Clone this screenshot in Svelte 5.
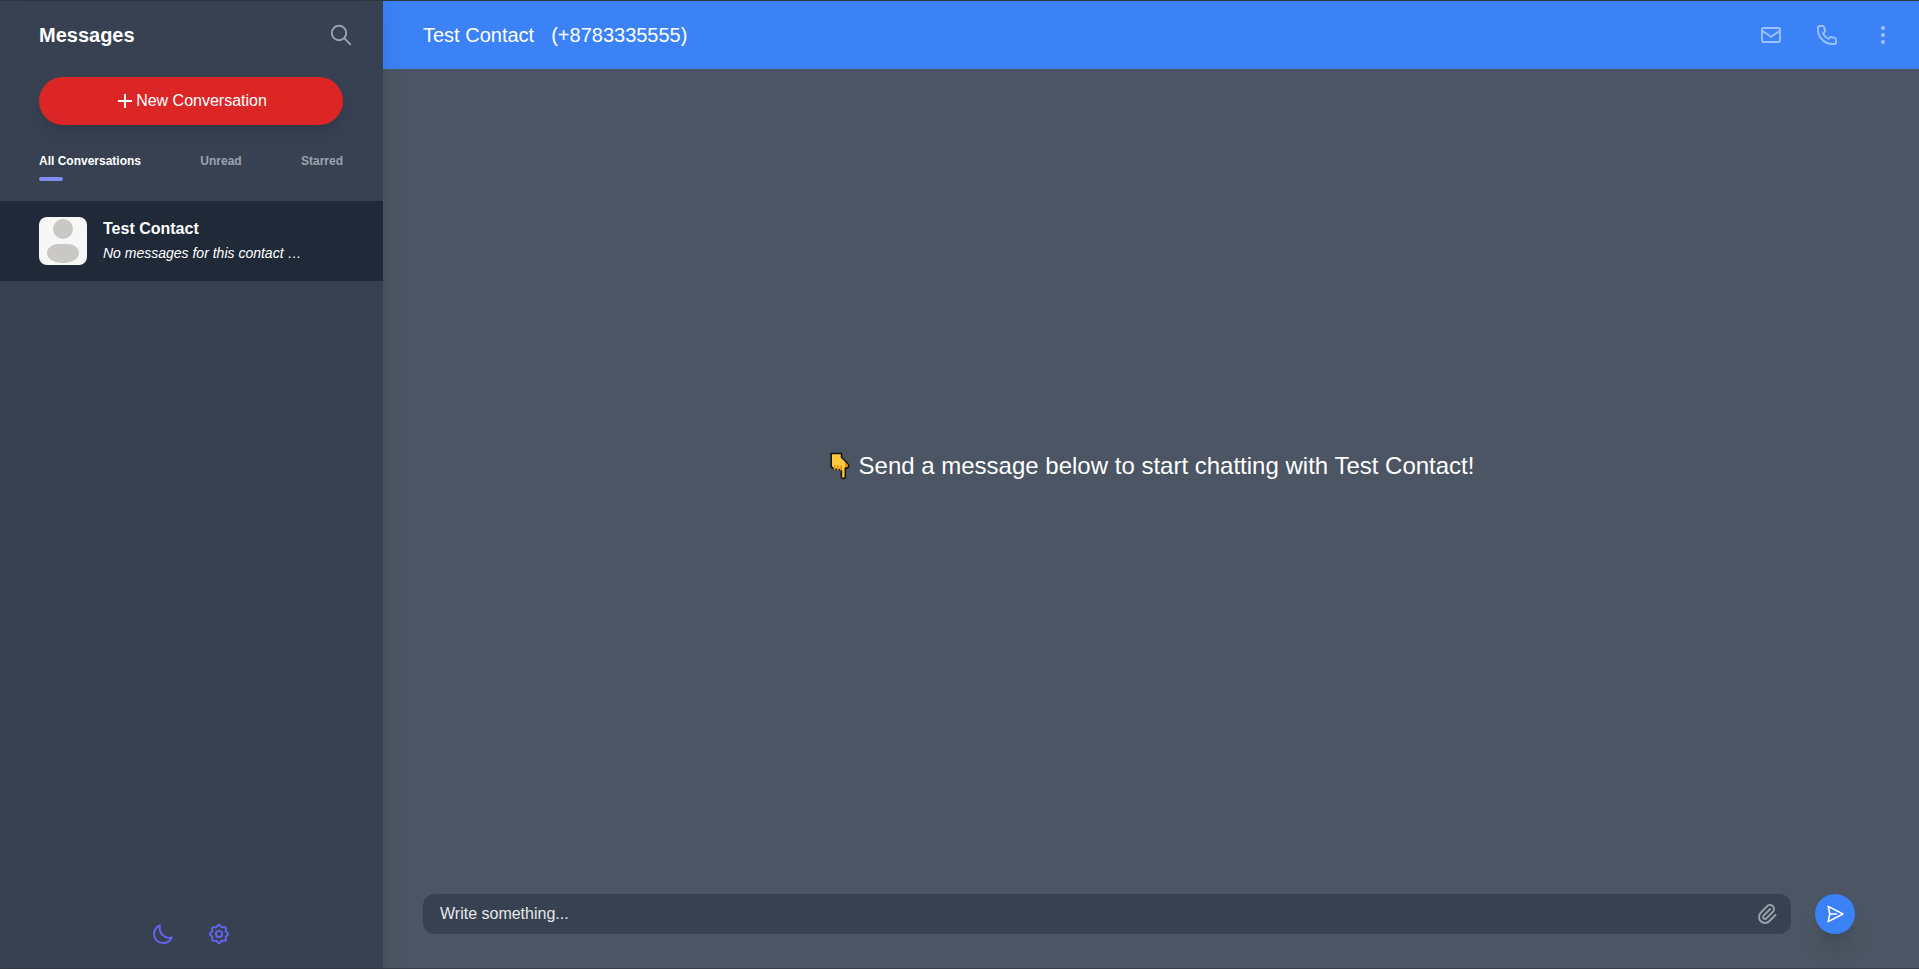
<script>
  const tabs = ['All Conversations', 'Unread', 'Starred'];
  const contact = { name: 'Test Contact', phone: '+8783335555' };
  let active = $state(0);
  let draft = $state('');

  // Outline of an eight-toothed gear around (12, 12)
  const gear =
    'M' +
    Array.from({ length: 96 }, (_, i) => {
      const a = (i / 96) * Math.PI * 2;
      const c = Math.cos(8 * a);
      const r = 8.2 + 0.85 * Math.sign(c) * Math.pow(Math.abs(c), 0.7);
      return `${(12 + r * Math.sin(a)).toFixed(2)} ${(12 - r * Math.cos(a)).toFixed(2)}`;
    }).join('L') +
    'Z';
</script>

<div class="app">
  <aside>
    <header class="side-head">
      <h1>Messages</h1>
      <button class="icon muted" aria-label="Search">
        <svg viewBox="0 0 24 24"><circle cx="10" cy="10" r="7.2" /><path d="M15.2 15.2 21.3 21.3" /></svg>
      </button>
    </header>
    <button class="new">
      <svg viewBox="0 0 14 14"><path d="M7 0v14M0 7h14" /></svg>
      New Conversation
    </button>
    <nav class="tabs">
      {#each tabs as tab, i}
        <button class:active={active === i} onclick={() => (active = i)}>{tab}</button>
      {/each}
    </nav>
    <a class="contact" href="#contact">
      <svg class="avatar" viewBox="0 0 48 48">
        <rect width="48" height="48" fill="#f7f7f7" />
        <circle cx="24" cy="12" r="10" fill="#c9c8c4" />
        <path d="M19 27H29C35 27 40 31 40 36C40 42 33 46 24 46S8 42 8 36C8 31 13 27 19 27Z" fill="#c9c8c4" />
      </svg>
      <div class="who">
        <strong>{contact.name}</strong>
        <em>No messages for this contact …</em>
      </div>
    </a>
    <footer class="tools">
      <button class="icon" aria-label="Dark mode">
        <svg viewBox="0 0 24 24"><path d="M9 3.4C5.4 4.9 3 8.2 3 12C3 17 7 21 12 21C16 21 19.4 18.8 20.8 15.3C14 17.6 7.2 11.2 9 3.4Z" /></svg>
      </button>
      <button class="icon" aria-label="Settings">
        <svg viewBox="0 0 24 24"><path d={gear} /><circle cx="12" cy="12" r="3.1" /></svg>
      </button>
    </footer>
  </aside>

  <main>
    <header class="chat-head">
      <h2>{contact.name}</h2>
      <span>({contact.phone})</span>
      <div class="actions">
        <button class="icon" aria-label="Email">
          <svg viewBox="0 0 24 24"><rect x="3" y="5" width="18" height="14" rx="1.4" /><path d="M3 7.8 12 13.8 21 7.8" /></svg>
        </button>
        <button class="icon" aria-label="Call">
          <svg viewBox="0 0 24 24"><path d="M4.6 3H7.5C8.3 3 8.9 3.4 9.1 4.1L10 7.5C10.2 8.2 10 8.8 9.5 9.2L8 10.5C9.2 12.9 11.1 14.8 13.5 16L14.8 14.5C15.2 14 15.8 13.8 16.4 14L19.8 14.9C20.5 15.1 21 15.7 21 16.5V19.4C21 20.3 20.4 21 19.4 21H17.5C9.5 21 3 14.5 3 6.5V4.6C3 3.6 3.6 3 4.6 3Z" /></svg>
        </button>
        <button class="icon" aria-label="More">
          <svg viewBox="0 0 24 24"><g class="dots"><circle cx="12" cy="5" r="2" /><circle cx="12" cy="12" r="2" /><circle cx="12" cy="19" r="2" /></g></svg>
        </button>
      </div>
    </header>

    <section class="empty">
      <svg class="hand" viewBox="0 0 20 28">
        <path d="M1.2 1.5H11.5V5.5C14 7.5 16.8 10.5 18.6 13L18.8 14.8L16.5 16H15.3V24.5C15.3 27.3 11.4 27.3 11.4 24.5V18L8 17.5L4.5 17L1.2 15Z" fill="#ffc83d" stroke="#111" stroke-width="1.5" stroke-linejoin="round" />
        <path d="M13 10.8C15.2 11.2 16 13 15.8 15.2L18.3 14.2L17.5 12Z" fill="#d67d00" />
        <path d="M4.6 14V17M7.9 14.2V17.4M11.1 14.2V17.8" stroke="#e79a16" fill="none" />
      </svg>
      <p>Send a message below to start chatting with {contact.name}!</p>
    </section>

    <form class="composer" onsubmit={(e) => e.preventDefault()}>
      <div class="field">
        <input aria-label="Message" placeholder="Write something..." bind:value={draft} />
        <button type="button" class="icon muted" aria-label="Attach file">
          <svg viewBox="0 0 24 24"><path d="M15.172 7l-6.586 6.586a2 2 0 102.828 2.828l6.414-6.586a4 4 0 00-5.656-5.656l-6.415 6.585a6 6 0 108.486 8.486L20.5 13" /></svg>
        </button>
      </div>
      <button class="send" aria-label="Send">
        <svg viewBox="0 0 20 20"><path d="M3.2 2.4 18 10 3.2 17.6 4.8 10ZM4.8 10H11.5" /></svg>
      </button>
    </form>
  </main>
</div>

<style>
  :global(body) {
    margin: 0;
    font-family: 'Liberation Sans', Arial, sans-serif;
    color: #fff;
  }
  .app {
    display: flex;
    box-sizing: border-box;
    min-height: 100vh;
    background: #4b5563;
    border-top: 1px solid #2f3541;
    border-bottom: 1px solid #363d48;
  }
  button {
    font: inherit;
    color: inherit;
    background: none;
    border: 0;
    padding: 0;
    cursor: pointer;
  }
  h1, h2, p { margin: 0; }
  svg {
    display: block;
    fill: none;
    stroke: currentColor;
    stroke-width: 1.9;
    stroke-linecap: round;
    stroke-linejoin: round;
  }
  .icon { flex: none; }
  .icon svg { width: 24px; height: 24px; }
  .muted { color: #9ca3af; }
  aside {
    flex: 0 0 20%;
    box-sizing: border-box;
    max-width: 383px;
    display: flex;
    flex-direction: column;
    background: #374151;
    box-shadow: 0 10px 20px rgba(0, 0, 0, 0.1);
    z-index: 1;
  }
  .side-head {
    display: flex;
    align-items: center;
    justify-content: space-between;
    height: 68px;
    padding: 0 30px 0 39px;
  }
  h1 { font-size: 20px; line-height: 28px; }
  .new {
    display: flex;
    align-items: center;
    justify-content: center;
    gap: 4px;
    height: 48px;
    margin: 8px 40px 0 39px;
    padding-left: 3px;
    border-radius: 24px;
    background: #dc2626;
    font-size: 16px;
    box-shadow: 0 10px 15px -3px rgba(0, 0, 0, 0.1), 0 4px 6px -2px rgba(0, 0, 0, 0.05);
  }
  .new svg { width: 14px; height: 14px; stroke-width: 2; stroke-linecap: butt; }
  .tabs {
    display: flex;
    justify-content: space-between;
    align-items: flex-start;
    height: 48px;
    margin: 28px 40px 0 39px;
    color: #9ca3af;
    font-size: 12px;
    line-height: 16px;
    font-weight: 700;
  }
  .tabs .active { color: #fff; }
  .tabs .active::after {
    content: '';
    display: block;
    width: 24px;
    height: 4px;
    margin-top: 8px;
    border-radius: 2px;
    background: #818cf8;
  }
  .contact {
    display: flex;
    gap: 16px;
    padding: 16px 39px;
    background: #1f2937;
    color: #fff;
    text-decoration: none;
  }
  .avatar { flex: none; width: 48px; height: 48px; border-radius: 8px; stroke: none; }
  .who { display: flex; flex-direction: column; min-width: 0; }
  .who strong { font-size: 16px; line-height: 24px; }
  .who em { font-size: 14px; line-height: 24px; white-space: nowrap; }
  .tools {
    display: flex;
    justify-content: center;
    gap: 32px;
    margin-top: auto;
    padding: 0 2px 22px 0;
    color: #6366f1;
  }
  main { flex: 1; min-width: 0; display: flex; flex-direction: column; }
  .chat-head {
    display: flex;
    align-items: center;
    gap: 17px;
    height: 68px;
    padding: 0 24px 0 40px;
    background: #3b82f6;
    font-size: 20px;
  }
  h2 { font-size: 20px; font-weight: 400; }
  .actions { display: flex; gap: 32px; margin-left: auto; color: #9dc1fb; }
  .dots { fill: currentColor; stroke: none; }
  .empty {
    flex: 1;
    display: flex;
    align-items: center;
    justify-content: center;
    gap: 9px;
    padding-left: 2px;
    font-size: 24px;
    line-height: 32px;
  }
  .hand { width: 20px; height: 28px; stroke: none; }
  .composer {
    display: flex;
    align-items: center;
    gap: 24px;
    padding: 31px 64px 34px 40px;
  }
  .field {
    flex: 1;
    display: flex;
    align-items: center;
    height: 40px;
    padding: 0 12px 0 17px;
    border-radius: 12px;
    background: #374151;
  }
  input {
    flex: 1;
    min-width: 0;
    padding: 0;
    border: 0;
    outline: 0;
    background: none;
    color: #fff;
    font: inherit;
    font-size: 16px;
  }
  input::placeholder { color: #e5e7eb; opacity: 1; }
  .send {
    display: grid;
    place-items: center;
    width: 40px;
    height: 40px;
    border-radius: 50%;
    background: #3b82f6;
    box-shadow: 0 20px 25px -5px rgba(0, 0, 0, 0.1), 0 10px 10px -5px rgba(0, 0, 0, 0.06);
  }
  .send svg { width: 20px; height: 20px; stroke-width: 1.6; }
</style>
